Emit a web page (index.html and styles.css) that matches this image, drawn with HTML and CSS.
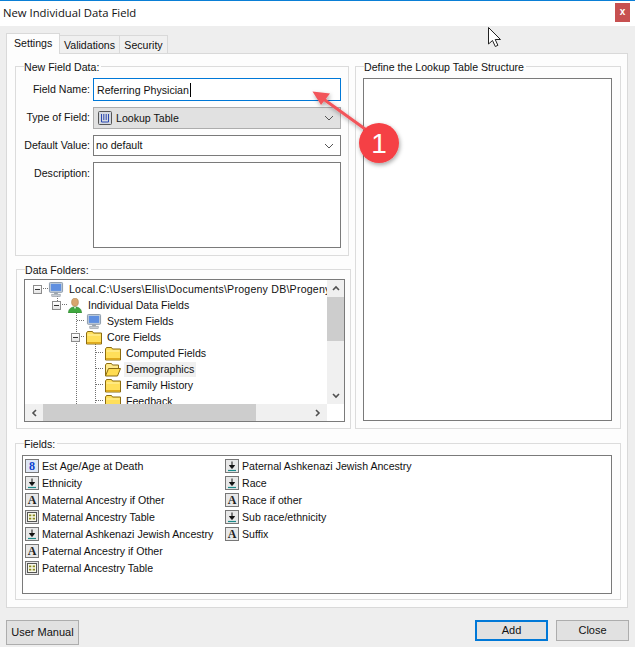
FILE: index.html
```html
<!DOCTYPE html>
<html lang="en">
<head>
<meta charset="utf-8">
<title>New Individual Data Field</title>
<link rel="stylesheet" href="styles.css">
</head>
<body>
<svg class="defs" width="0" height="0" aria-hidden="true">
  <symbol id="i-monitor" viewBox="0 0 16 16">
    <rect x="1" y="0.5" width="14" height="10.5" rx="1" fill="#c4d0dc" stroke="#8a98a8"/>
    <rect x="2.5" y="2" width="11" height="7.5" fill="#5f8fe0"/>
    <rect x="6" y="11" width="4" height="2" fill="#9aa4ae"/>
    <rect x="3.5" y="13" width="9" height="2.5" fill="#c9ced4" stroke="#8a929a" stroke-width=".6"/>
  </symbol>
  <symbol id="i-person" viewBox="0 0 16 16">
    <ellipse cx="8" cy="4.5" rx="3.6" ry="4.3" fill="#d9a66e" stroke="#a87c48" stroke-width=".6"/>
    <path d="M1 16c0-4.5 3-6.5 7-6.5s7 2 7 6.5z" fill="#3fa83f" stroke="#2a7f2a" stroke-width=".6"/>
    <path d="M7 9.5h2l-1 2.6z" fill="#fff"/>
  </symbol>
  <symbol id="i-folder" viewBox="0 0 16 14">
    <path d="M.5 13.5V2.5l1-1.500h5l1 1.500h8v11z" fill="#ffdf5a" stroke="#8c6c10"/>
    <path d="M1.5 4.5h13" stroke="#fff3a8"/>
    <path d="M1 11.5h14v1.500H1z" fill="#e0aa1c"/>
  </symbol>
  <symbol id="i-folder-open" viewBox="0 0 16 14">
    <path d="M.5 13.5V2.5l1-1.500h5l1 1.500h6v3" fill="#ffe98a" stroke="#8c6c10"/>
    <path d="M.5 13.500l3-7.500h12l-3 7.500z" fill="#ffdc50" stroke="#8c6c10"/>
  </symbol>
  <symbol id="i-drop" viewBox="0 0 12 12">
    <path d="M6 1.500v4.500M3.500 5.500h5L6 8.500z" fill="#111" stroke="#111"/>
    <path d="M2 10.500h8" stroke="#1b8a8a" stroke-width="1.200"/>
  </symbol>
  <symbol id="i-table" viewBox="0 0 12 12">
    <rect x="1.500" y="1.500" width="9" height="9" fill="#f8f8e8" stroke="#555"/>
    <path d="M3 3.500h2.300v1.800H3zM6.700 3.500H9v1.800H6.700zM3 6.700h2.300v1.800H3zM6.700 6.700H9v1.800H6.700z" fill="#8a8a20"/>
  </symbol>
  <symbol id="i-chev" viewBox="0 0 10 6">
    <path d="M1 1l4 4 4-4" fill="none" stroke="#555" stroke-width="1"/>
  </symbol>
  <symbol id="i-scroll" viewBox="0 0 8 6">
    <path d="M1 5l3-3 3 3" fill="none" stroke="#505050" stroke-width="1.600"/>
  </symbol>
</svg>

<div class="window">
  <header class="titlebar">
    <span class="title">New Individual Data Field</span>
    <span class="close">x</span>
  </header>

  <nav class="tabs">
    <span class="tab active">Settings</span>
    <span class="tab">Validations</span>
    <span class="tab">Security</span>
  </nav>

  <main class="panel">
    <div class="left-col">
      <fieldset class="group field-data">
        <legend>New Field Data:</legend>
        <div class="form">
          <label class="low">Field Name:</label>
          <div class="input focused">Referring Physician<i class="caret"></i></div>
          <label>Type of Field:</label>
          <div class="input combo readonly">
            <svg class="lookup-icon" viewBox="0 0 14 14"><rect x=".5" y=".5" width="13" height="13" rx="1" fill="#d4d8e0" stroke="#555"/><path d="M3.500 3v8h7V3M5.800 3v6M8.200 3v6" fill="none" stroke="#2a48b0"/></svg>
            <span>Lookup Table</span>
            <svg class="chev"><use href="#i-chev"/></svg>
          </div>
          <label>Default Value:</label>
          <div class="input combo plain">
            <span>no default</span>
            <svg class="chev"><use href="#i-chev"/></svg>
          </div>
          <label class="low">Description:</label>
          <div class="input textarea"></div>
        </div>
      </fieldset>

      <fieldset class="group folders">
        <legend>Data Folders:</legend>
        <div class="tree">
          <div class="tree-view">
            <svg class="tree-lines" width="302" height="124" aria-hidden="true">
              <path d="M18 8.500h5M37 24.500h5M32.500 16v7M51.500 31v93M52 40.500h8M52 56.500h8M70.500 64v60M71 72.500h8M71 88.500h8M71 104.500h8M71 120.500h8" fill="none" stroke="#707070" stroke-dasharray="1 1"/>
            </svg>
            <div class="node l0"><i class="exp"></i><svg class="ic"><use href="#i-monitor"/></svg><span class="path">Local.C:\Users\Ellis\Documents\Progeny DB\Progeny DB</span></div>
            <div class="node l1"><i class="exp"></i><svg class="ic"><use href="#i-person"/></svg><span>Individual Data Fields</span></div>
            <div class="node l2"><svg class="ic"><use href="#i-monitor"/></svg><span>System Fields</span></div>
            <div class="node l2b"><i class="exp"></i><svg class="ic"><use href="#i-folder"/></svg><span>Core Fields</span></div>
            <div class="node l3"><svg class="ic"><use href="#i-folder"/></svg><span>Computed Fields</span></div>
            <div class="node l3"><svg class="ic"><use href="#i-folder-open"/></svg><span class="sel">Demographics</span></div>
            <div class="node l3"><svg class="ic"><use href="#i-folder"/></svg><span>Family History</span></div>
            <div class="node l3"><svg class="ic"><use href="#i-folder"/></svg><span>Feedback</span></div>
          </div>
          <div class="vbar">
            <svg class="sa"><use href="#i-scroll"/></svg>
            <div class="vtrack"><div class="vthumb"></div></div>
            <svg class="sa flip"><use href="#i-scroll"/></svg>
          </div>
          <div class="hbar">
            <svg class="sa left"><use href="#i-scroll"/></svg>
            <div class="htrack"><div class="hthumb"></div></div>
            <svg class="sa right"><use href="#i-scroll"/></svg>
          </div>
        </div>
      </fieldset>
    </div>

    <fieldset class="group structure">
      <legend>Define the Lookup Table Structure</legend>
      <div class="structure-box"></div>
    </fieldset>

    <fieldset class="group fields">
      <legend>Fields:</legend>
      <div class="list">
        <div class="item"><b class="fi num">8</b>Est Age/Age at Death</div>
        <div class="item"><svg class="fi"><use href="#i-drop"/></svg>Ethnicity</div>
        <div class="item"><b class="fi">A</b>Maternal Ancestry if Other</div>
        <div class="item"><svg class="fi"><use href="#i-table"/></svg>Maternal Ancestry Table</div>
        <div class="item"><svg class="fi"><use href="#i-drop"/></svg>Maternal Ashkenazi Jewish Ancestry</div>
        <div class="item"><b class="fi">A</b>Paternal Ancestry if Other</div>
        <div class="item"><svg class="fi"><use href="#i-table"/></svg>Paternal Ancestry Table</div>
        <div class="item"><svg class="fi"><use href="#i-drop"/></svg>Paternal Ashkenazi Jewish Ancestry</div>
        <div class="item"><svg class="fi"><use href="#i-drop"/></svg>Race</div>
        <div class="item"><b class="fi">A</b>Race if other</div>
        <div class="item"><svg class="fi"><use href="#i-drop"/></svg>Sub race/ethnicity</div>
        <div class="item"><b class="fi">A</b>Suffix</div>
      </div>
    </fieldset>
  </main>

  <footer class="footer">
    <button class="btn manual">User Manual</button>
    <span class="spacer"></span>
    <button class="btn default">Add</button>
    <button class="btn">Close</button>
  </footer>
</div>

<svg class="overlay" width="635" height="647" viewBox="0 0 635 647" aria-hidden="true">
  <defs>
    <filter id="sh" x="-30%" y="-30%" width="160%" height="160%"><feDropShadow dx="1" dy="2" stdDeviation="2" flood-color="#000" flood-opacity=".35"/></filter>
  </defs>
  <g filter="url(#sh)">
    <path d="M372 134L322 98" stroke="#f2555a" stroke-width="3" fill="none"/>
    <path d="M312.500 91.500L330 93.500L321 105z" fill="#f2555a"/>
    <circle cx="379" cy="143" r="20" fill="#f54045"/>
  </g>
  <text x="379" y="153" class="badge">1</text>
  <path d="M488.500 27.500V44l4-3.500 2.800 6 2.600-1.200-2.700-5.800h5.300z" fill="#fff" stroke="#222"/>
</svg>
</body>
</html>
```

FILE: styles.css
```css
* { box-sizing: border-box; }
html, body { margin: 0; padding: 0; }
body {
  width: 635px;
  height: 647px;
  overflow: hidden;
  background: #eeeeee;
  color: #111;
  font: 10.6px/14px "Liberation Sans", Arial, sans-serif;
  position: relative;
}
.defs { position: absolute; }
.window { width: 635px; height: 647px; display: flex; flex-direction: column; }

.titlebar {
  height: 26px;
  flex: none;
  background: #fff;
  border-top: 1px solid #0a7fd6;
  padding: 0 5px 0 3px;
  display: flex;
  justify-content: space-between;
  align-items: flex-start;
}
.title { font: 11.3px/23px "Open Sans", sans-serif; }
.close {
  width: 15px;
  height: 19px;
  margin-top: 2px;
  background: #c75050;
  color: #fff;
  font: bold 10px/18px "Liberation Sans", sans-serif;
  text-align: center;
}

.tabs {
  height: 27px;
  flex: none;
  padding-left: 6px;
  display: flex;
  align-items: flex-end;
  position: relative;
  z-index: 1;
}
.tab {
  height: 18px;
  padding: 0;
  border: 1px solid #d9d9d9;
  border-left: 0;
  border-bottom: 0;
  background: #f0f0f0;
  line-height: 18px;
  display: block;
}
.tab:nth-child(2) { width: 60px; text-align: center; }
.tab:nth-child(3) { width: 48px; text-align: center; }
.tab.active {
  width: 54px;
  height: 21px;
  margin-bottom: -1px;
  background: #fdfdfd;
  border-left: 1px solid #d9d9d9;
  padding: 0 0 0 7px;
  line-height: 18px;
}

.panel {
  margin-left: 6px;
  width: 622px;
  height: 555px;
  flex: none;
  background: #fdfdfd;
  border: 1px solid #d9d9d9;
  padding: 5px 7px 0 8px;
  display: grid;
  grid-template-columns: 335px 266px;
  grid-template-rows: 370px 164px;
  column-gap: 5px;
  row-gap: 7px;
}

.group {
  margin: 0;
  min-width: 0;
  border: 1px solid #dcdcdc;
  padding: 0;
}
.group legend {
  margin-left: 8px;
  padding: 0 2px 0 0;
  height: 14px;
  line-height: 17px;
}

.left-col { display: flex; flex-direction: column; gap: 6px; min-width: 0; }

.field-data { height: 198px; width: 334px; }
.form {
  display: grid;
  grid-template-columns: 74px 248px;
  grid-template-rows: 23px 22px 21px 86px;
  row-gap: 6px;
  column-gap: 3px;
  padding: 5px 0 0 0;
}
.form label { text-align: right; line-height: 21px; white-space: nowrap; }
.form .low { line-height: 23px; }
.input {
  border: 1px solid #7a7a7a;
  background: #fff;
  padding: 0 2px;
  line-height: 20px;
  display: flex;
  align-items: center;
  white-space: nowrap;
}
.focused { border-color: #0078d7; padding-left: 3px; }
.caret { display: block; width: 1px; height: 14px; background: #000; margin-left: 1px; }
.readonly { background: #e1e1e1; border-color: #adadad; padding-left: 4px; }
.plain span { padding-bottom: 1px; }
.lookup-icon { width: 14px; height: 14px; margin-right: 4px; flex: none; }
.chev { width: 10px; height: 6px; margin-left: auto; margin-right: 4px; }
.textarea { background: #fff; }

.folders { height: 167px; width: 335px; margin-left: 1px; }
.tree {
  margin: 3px 0 0 7px;
  width: 321px;
  height: 143px;
  border: 1px solid #7a7a7a;
  background: #fff;
  display: grid;
  grid-template-columns: 302px 17px;
  grid-template-rows: 124px 17px;
}
.tree-view { position: relative; overflow: hidden; padding-top: 1px; }
.tree-lines { position: absolute; left: 0; top: 0; }
.node {
  height: 16px;
  display: flex;
  align-items: center;
  white-space: nowrap;
  position: relative;
}
.path { letter-spacing: .22px; }
.exp {
  width: 9px;
  height: 9px;
  border: 1px solid #8c8c8c;
  background: linear-gradient(#fff, #e4e4e4);
  margin-right: 6px;
  flex: none;
  position: relative;
}
.exp::after {
  content: "";
  position: absolute;
  left: 1px;
  right: 1px;
  top: 3px;
  height: 1px;
  background: #333;
}
.ic { width: 16px; height: 15px; flex: none; margin-right: 5px; }
.l0 { padding-left: 8px; }
.l1 { padding-left: 27px; }
.l2 { padding-left: 61px; }
.l2b { padding-left: 46px; }
.l3 { padding-left: 80px; }
.sel { background: #f0f0f0; padding: 0 2px; margin-left: -2px; line-height: 15px; }

.vbar {
  grid-row: 1;
  grid-column: 2;
  background: #f0f0f0;
  display: flex;
  flex-direction: column;
  align-items: center;
}
.sa { width: 8px; height: 6px; flex: none; }
.vbar .sa { margin: 5px 0 6px; }
.vbar .flip { transform: rotate(180deg); margin: 6px 0 5px; }
.vtrack { flex: 1; width: 100%; }
.vthumb { height: 44px; background: #cdcdcd; }
.hbar {
  grid-row: 2;
  grid-column: 1;
  background: #f0f0f0;
  display: flex;
  align-items: center;
}
.left { transform: rotate(-90deg); margin: 0 5px; }
.right { transform: rotate(90deg); margin: 0 5px; }
.htrack { flex: 1; height: 100%; }
.hthumb { width: 213px; height: 100%; background: #cdcdcd; }

.structure { grid-row: 1; grid-column: 2; height: 370px; }
.structure-box {
  margin: 5px 8px 0 7px;
  height: 343px;
  border: 1px solid #7a7a7a;
  background: #fff;
}

.fields { grid-row: 2; grid-column: 1 / 3; height: 164px; }
.list {
  margin: 5px 8px 0 6px;
  height: 139px;
  border: 1px solid #7a7a7a;
  background: #fff;
  padding: 1px 0 0 2px;
  display: grid;
  grid-auto-flow: column;
  grid-template-rows: repeat(7, 17px);
  grid-template-columns: 200px 1fr;
}
.item { display: flex; align-items: center; white-space: nowrap; }
.fi {
  width: 14px;
  height: 14px;
  flex: none;
  margin-right: 3px;
  border: 1px solid #777;
  background: #e8e8e8;
  display: block;
  text-align: center;
  font: bold 12px/12px "Liberation Serif", serif;
  color: #222;
}
.fi.num { color: #0a3fd0; background: #dfe7f5; }

.footer {
  flex: 1;
  display: flex;
  align-items: flex-start;
  padding: 12px 6px 0;
  gap: 8px;
}
.spacer { flex: 1; }
.btn {
  width: 73px;
  height: 21px;
  padding: 0;
  margin: 0;
  background: #e1e1e1;
  border: 1px solid #adadad;
  color: #111;
  font: inherit;
  font-size: 11px;
  line-height: 17px;
}
.manual { height: 25px; }
.default { border: 2px solid #0078d7; }

.overlay { position: absolute; left: 0; top: 0; pointer-events: none; }
.badge {
  fill: #fff;
  font: 28px "Liberation Sans", sans-serif;
  text-anchor: middle;
}
```
